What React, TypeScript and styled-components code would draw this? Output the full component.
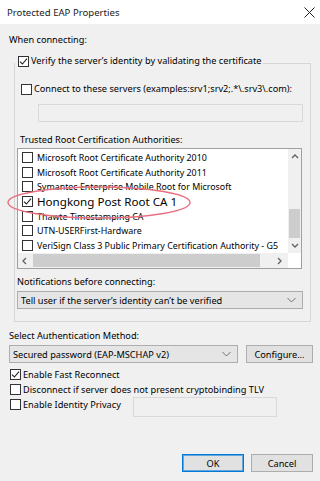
import React from "react";
import styled, { createGlobalStyle } from "styled-components";

const GlobalStyle = createGlobalStyle`
  html, body {
    margin: 0;
    padding: 0;
    background: #f0f0f0;
  }
  * {
    box-sizing: border-box;
  }
`;

const FONT = `"Noto Sans", "Open Sans", sans-serif`;

const Window = styled.div`
  position: relative;
  width: 320px;
  height: 481px;
  display: flex;
  flex-direction: column;
  background: #f0f0f0;
  font-family: ${FONT};
  font-size: 9.2px;
  color: #000;
  overflow: hidden;
`;

const TitleBar = styled.div`
  height: 24px;
  flex-shrink: 0;
  display: flex;
  align-items: center;
  justify-content: space-between;
  padding: 0 5px 0 7px;
  background: #fff;
  font-size: 9.6px;
  color: #1a1a1a;
`;

const Content = styled.div`
  flex: 1;
  display: flex;
  flex-direction: column;
  padding: 0 7px 9px 9px;
`;

const Label = styled.div<{ $top: number; $left?: number }>`
  height: 14px;
  line-height: 14px;
  margin-top: ${({ $top }) => $top}px;
  margin-left: ${({ $left }) => $left ?? 0}px;
  white-space: nowrap;
`;

const GroupBox = styled.fieldset`
  width: 297px;
  margin: 7px 0 0 5px;
  padding: 0 0 12px 0;
  border: 1px solid #d5d5d5;
  display: flex;
  flex-direction: column;
  min-width: 0;
`;

const Legend = styled.legend`
  padding: 0 1px 4px 3px;
  margin: 0;
`;

const CheckRow = styled.label<{ $top?: number; $left?: number }>`
  display: flex;
  align-items: center;
  gap: 2px;
  height: 14px;
  line-height: 14px;
  margin-top: ${({ $top }) => $top ?? 0}px;
  margin-left: ${({ $left }) => $left ?? 0}px;
  white-space: nowrap;
`;

const Box = styled.span`
  width: 11px;
  height: 11px;
  flex-shrink: 0;
  border: 1px solid #333;
  background: #fff;
  display: flex;
  align-items: center;
  justify-content: center;
`;

const TextInput = styled.div<{ $w: number; $h: number; $left?: number; $top?: number }>`
  width: ${({ $w }) => $w}px;
  height: ${({ $h }) => $h}px;
  margin-top: ${({ $top }) => $top ?? 0}px;
  margin-left: ${({ $left }) => $left ?? 0}px;
  border: 1px solid #d9d9d9;
  background: #f0f0f0;
  flex-shrink: 0;
`;

const ListBox = styled.div`
  width: 285px;
  height: 121px;
  margin: 1px 0 0 2px;
  border: 1px solid #a0a0a0;
  background: #fff;
  display: grid;
  grid-template-columns: 1fr 13px;
  grid-template-rows: 1fr 15px;
`;

const ListItems = styled.div`
  overflow: hidden;
  padding: 1px 0 0 4px;
`;

const ListRow = styled.div<{ $big?: boolean }>`
  display: flex;
  align-items: center;
  gap: 4px;
  height: 14.7px;
  white-space: nowrap;
  font-size: ${({ $big }) => ($big ? "11.6px" : "8.9px")};
`;

const VScroll = styled.div`
  display: flex;
  flex-direction: column;
  background: #f0f0f0;
`;

const HScroll = styled.div`
  display: flex;
  background: #f0f0f0;
`;

const ArrowButton = styled.div<{ $size: number; $vertical?: boolean }>`
  flex-shrink: 0;
  ${({ $vertical, $size }) =>
    $vertical ? `height: ${$size}px;` : `width: ${$size}px;`}
  display: flex;
  align-items: center;
  justify-content: center;
`;

const VTrack = styled.div`
  flex: 1;
  display: flex;
  flex-direction: column;
  justify-content: flex-end;
  padding: 0 1px;
`;

const VThumb = styled.div`
  height: 29px;
  background: #cdcdcd;
`;

const HTrack = styled.div`
  flex: 1;
  display: flex;
  align-items: stretch;
  padding: 1px 0 1px 1px;
`;

const HThumb = styled.div`
  width: 227px;
  background: #cdcdcd;
`;

const Corner = styled.div`
  background: #fff;
`;

const Select = styled.div<{ $w: number; $left?: number }>`
  width: ${({ $w }) => $w}px;
  height: 18px;
  margin-left: ${({ $left }) => $left ?? 0}px;
  flex-shrink: 0;
  display: flex;
  align-items: center;
  justify-content: space-between;
  padding: 0 6px 0 3px;
  background: #e5e5e5;
  border: 1px solid #adadad;
  white-space: nowrap;
`;

const NotifySelect = styled(Select)`
  margin-top: 2px;
`;

const AuthRow = styled.div`
  display: flex;
  gap: 8px;
  margin-top: 2px;
`;

const Button = styled.div<{ $w: number; $default?: boolean }>`
  width: ${({ $w }) => $w}px;
  height: 18px;
  flex-shrink: 0;
  display: flex;
  align-items: center;
  justify-content: center;
  background: #e1e1e1;
  border: 1px solid ${({ $default }) => ($default ? "#0078d7" : "#adadad")};
  box-shadow: ${({ $default }) =>
    $default ? "inset 0 0 0 1px rgba(0, 120, 215, 0.55)" : "none"};
`;

const Options = styled.div`
  display: flex;
  flex-direction: column;
  margin: 4px 0 0 1px;
`;

const OptionRow = styled.div`
  display: flex;
  align-items: flex-start;
`;

const OptionLabel = styled(CheckRow)`
  height: 15px;
  line-height: 15px;
  width: 123px;
`;

const Footer = styled.div`
  margin-top: auto;
  display: flex;
  justify-content: flex-end;
  gap: 7px;
`;

const Annotation = styled.svg`
  position: absolute;
  left: 7px;
  top: 185px;
  pointer-events: none;
`;

const Check = () => (
  <svg width="9" height="9" viewBox="0 0 9 9">
    <path d="M1 4.6 L3.4 7 L8 1.6" fill="none" stroke="#222" strokeWidth="1.1" />
  </svg>
);

const CheckBox = ({ checked }: { checked?: boolean }) => (
  <Box>{checked ? <Check /> : null}</Box>
);

const Chevron = ({ dir }: { dir: "up" | "down" | "left" | "right" }) => {
  const paths = {
    up: "M1 5 L4 2 L7 5",
    down: "M1 2 L4 5 L7 2",
    left: "M5 1 L2 4 L5 7",
    right: "M2 1 L5 4 L2 7",
  };
  return (
    <svg width="8" height="8" viewBox="0 0 8 8">
      <path d={paths[dir]} fill="none" stroke="#606060" strokeWidth="1.3" />
    </svg>
  );
};

const DropArrow = () => (
  <svg width="9" height="6" viewBox="0 0 9 6">
    <path d="M0.5 1 L4.5 5 L8.5 1" fill="none" stroke="#707070" strokeWidth="1" />
  </svg>
);

const CloseIcon = () => (
  <svg width="11" height="11" viewBox="0 0 11 11">
    <path d="M0.5 0.5 L10.5 10.5 M10.5 0.5 L0.5 10.5" stroke="#222" strokeWidth="1" />
  </svg>
);

const certificates = [
  { name: "Microsoft Root Certificate Authority 2010" },
  { name: "Microsoft Root Certificate Authority 2011" },
  { name: "Symantec Enterprise Mobile Root for Microsoft" },
  { name: "Hongkong Post Root CA 1", checked: true, big: true },
  { name: "Thawte Timestamping CA" },
  { name: "UTN-USERFirst-Hardware" },
  { name: "VeriSign Class 3 Public Primary Certification Authority - G5" },
];

const App = () => {
  return (
    <>
      <GlobalStyle />
      <Window>
        <TitleBar>
          <span>Protected EAP Properties</span>
          <CloseIcon />
        </TitleBar>
        <Content>
          <Label $top={9}>When connecting:</Label>
          <GroupBox>
            <Legend>
              <CheckRow>
                <CheckBox checked />
                <span>Verify the server’s identity by validating the certificate</span>
              </CheckRow>
            </Legend>
            <CheckRow $top={10} $left={6}>
              <CheckBox />
              <span>Connect to these servers (examples:srv1;srv2;.*\.srv3\.com):</span>
            </CheckRow>
            <TextInput $w={265} $h={18} $left={23} $top={8} />
            <Label $top={11} $left={5}>
              Trusted Root Certification Authorities:
            </Label>
            <ListBox>
              <ListItems>
                {certificates.map((cert) => (
                  <ListRow key={cert.name} $big={cert.big}>
                    <CheckBox checked={cert.checked} />
                    <span>{cert.name}</span>
                  </ListRow>
                ))}
              </ListItems>
              <VScroll>
                <ArrowButton $vertical $size={16}>
                  <Chevron dir="up" />
                </ArrowButton>
                <VTrack>
                  <VThumb />
                </VTrack>
                <ArrowButton $vertical $size={15}>
                  <Chevron dir="down" />
                </ArrowButton>
              </VScroll>
              <HScroll>
                <ArrowButton $size={14}>
                  <Chevron dir="left" />
                </ArrowButton>
                <HTrack>
                  <HThumb />
                </HTrack>
                <ArrowButton $size={16}>
                  <Chevron dir="right" />
                </ArrowButton>
              </HScroll>
              <Corner />
            </ListBox>
            <Label $top={6} $left={2}>
              Notifications before connecting:
            </Label>
            <NotifySelect $w={286} $left={2}>
              <span>Tell user if the server’s identity can’t be verified</span>
              <DropArrow />
            </NotifySelect>
          </GroupBox>
          <Label $top={7}>Select Authentication Method:</Label>
          <AuthRow>
            <Select $w={229}>
              <span>Secured password (EAP-MSCHAP v2)</span>
              <DropArrow />
            </Select>
            <Button $w={67}>Configure...</Button>
          </AuthRow>
          <Options>
            <OptionRow>
              <OptionLabel>
                <CheckBox checked />
                <span>Enable Fast Reconnect</span>
              </OptionLabel>
            </OptionRow>
            <OptionRow>
              <OptionLabel>
                <CheckBox />
                <span>Disconnect if server does not present cryptobinding TLV</span>
              </OptionLabel>
            </OptionRow>
            <OptionRow>
              <OptionLabel>
                <CheckBox />
                <span>Enable Identity Privacy</span>
              </OptionLabel>
              <TextInput $w={144} $h={20} />
            </OptionRow>
          </Options>
          <Footer>
            <Button $w={62} $default>
              OK
            </Button>
            <Button $w={62}>Cancel</Button>
          </Footer>
        </Content>
        <Annotation width="186" height="36" viewBox="0 0 186 36">
          <ellipse cx="92" cy="17.5" rx="91" ry="15.5" fill="none" stroke="#e8707e" strokeWidth="1.4" />
        </Annotation>
      </Window>
    </>
  );
};

export default App;
